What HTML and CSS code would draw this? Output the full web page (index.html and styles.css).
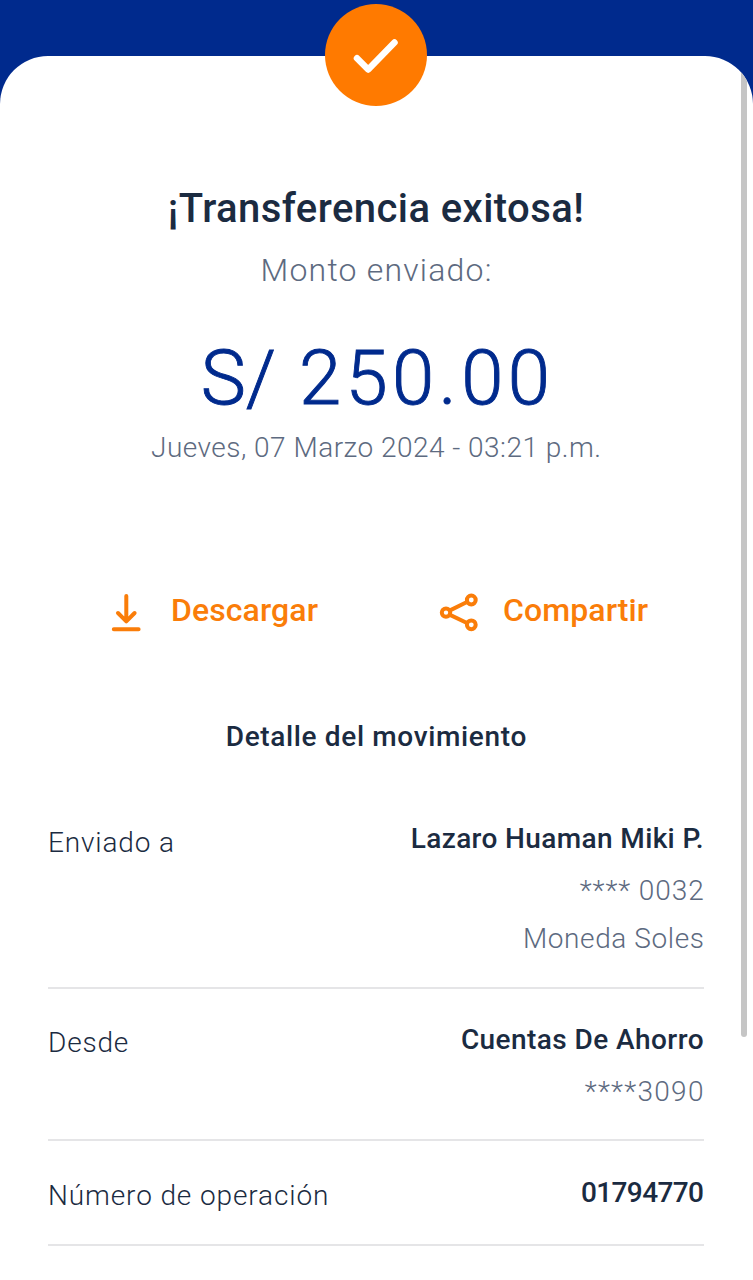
FILE: index.html
```html
<!DOCTYPE html>
<html lang="es">
<head>
<meta charset="utf-8">
<title>Transferencia exitosa</title>
<link rel="stylesheet" href="styles.css">
</head>
<body>
<main class="sheet">
  <div class="badge">
    <svg width="102" height="102" viewBox="0 0 102 102" fill="none" stroke="#fff" stroke-width="6.5" stroke-linecap="round" stroke-linejoin="round"><path d="M32 54.3 L43.2 65.5 L69.5 38.5"/></svg>
  </div>
  <h1 class="title">¡Transferencia exitosa!</h1>
  <p class="caption">Monto enviado:</p>
  <p class="amount"><span class="currency">S/</span> 250.00</p>
  <p class="date">Jueves, 07 Marzo 2024 - 03:21 p.m.</p>
  <div class="actions">
    <a class="action download">
      <svg width="30" height="44" viewBox="0 0 30 44" fill="none" stroke="#fa7d09" stroke-width="4" stroke-linecap="round" stroke-linejoin="round"><path d="M15.3 6v25M7 23l8.3 8.3L23.6 23M2.8 39.3h24.8"/></svg>
      <span class="download-text">Descargar</span>
    </a>
    <a class="action share">
      <svg width="40" height="44" viewBox="0 0 40 44" fill="none" stroke="#fa7d09" stroke-width="4"><circle cx="7" cy="22.6" r="4.2"/><circle cx="32.3" cy="10" r="4.4"/><circle cx="32.3" cy="34.8" r="4.4"/><path d="M10.5 20.6l18-8.8M10.5 24.6l18 8.6"/></svg>
      <span class="share-text">Compartir</span>
    </a>
  </div>
  <h2 class="section">Detalle del movimiento</h2>
  <section class="details">
    <div class="row sent">
      <span class="label label-sent">Enviado a</span>
      <div class="values"><b class="v-name">Lazaro Huaman Miki P.</b><span class="v-card">**** 0032</span><span class="v-currency">Moneda Soles</span></div>
    </div>
    <div class="row from">
      <span class="label label-from">Desde</span>
      <div class="values"><b class="v-account">Cuentas De Ahorro</b><span class="v-source">****3090</span></div>
    </div>
    <div class="row operation">
      <span class="label label-op">Número de operación</span>
      <div class="values"><b class="v-op">01794770</b></div>
    </div>
  </section>
  <div class="scroll-area"><div class="scrollbar"></div></div>
</main>
</body>
</html>
```
FILE: styles.css
```css
* { box-sizing: border-box; }
body {
  margin: 0;
  height: 1280px;
  padding-top: 56px;
  overflow: hidden;
  background: #002a8d;
  font-family: Roboto, "Open Sans", sans-serif;
  color: #1b2b41;
}
h1, h2, p { margin: 0; text-align: center; }
.sheet {
  position: relative;
  height: 1224px;
  padding: 129px 49px 0 48px;
  background: #fff;
  border-radius: 48px 48px 0 0;
}
.badge {
  position: absolute;
  top: -52px;
  left: 325px;
  width: 102px;
  height: 102px;
  border-radius: 50%;
  background: #ff7a00;
}
.badge svg { display: block; }
.title { font-size: 40px; line-height: 48px; font-weight: 500; letter-spacing: 0.43px; }
.caption { margin-top: 17px; font-size: 32px; line-height: 40px; font-weight: 300; letter-spacing: 1.2px; text-indent: 1.2px; color: #5d6a80; }
.amount { margin-top: 43px; font-size: 76px; line-height: 90px; font-weight: 300; letter-spacing: 4.4px; text-indent: 3px; color: #002a8d; -webkit-text-stroke: 0.9px #002a8d; }
.currency { letter-spacing: 0; }
.date { margin-top: 5px; font-size: 28px; line-height: 40px; font-weight: 300; letter-spacing: 0.48px; text-indent: 0.5px; color: #5d6a80; }
.actions { display: flex; margin-top: 122px; height: 40px; color: #fa7d09; font-size: 32px; line-height: 40px; font-weight: 500; }
.action { display: flex; }
.download { padding-left: 63px; width: 391px; gap: 30px; letter-spacing: 0.1px; }
.share { gap: 24px; letter-spacing: 0.1px; }
.section { margin-top: 87px; font-size: 28px; line-height: 40px; font-weight: 500; letter-spacing: 0.65px; text-indent: 0.65px; }
.details { margin-top: 32px; font-size: 28px; line-height: 40px; }
.row { display: flex; justify-content: space-between; padding-top: 30px; border-bottom: 2px solid #e5e5e7; }
.sent { height: 200px; }
.from { height: 152px; padding-top: 31px; }
.operation { height: 105px; padding-top: 32px; }
.label { padding-top: 3px; font-weight: 300; white-space: nowrap; }
.sent .label { padding-top: 4px; }
.label-sent { letter-spacing: 0.85px; }
.label-from { letter-spacing: 0.8px; }
.label-op { letter-spacing: 0.88px; }
.values { display: flex; flex-direction: column; align-items: flex-end; white-space: nowrap; }
.values b { font-weight: 500; }
.values span { font-weight: 300; color: #5d6a80; }
.v-name { letter-spacing: 0.37px; }
.values .v-card { margin: 12px -0.8px 0 0; letter-spacing: 0.95px; }
.values .v-currency { margin: 8px -0.6px 0 0; letter-spacing: 0.6px; }
.v-account { letter-spacing: 0.43px; }
.values .v-source { margin: 12px -0.8px 0 0; letter-spacing: 1.3px; }
.v-op { margin-right: 0.6px; letter-spacing: -0.6px; }
/* Clips the scroll thumb to the sheet's rounded corner. */
.scroll-area {
  position: absolute;
  inset: 0;
  overflow: hidden;
  border-radius: inherit;
  pointer-events: none;
}
.scrollbar {
  position: absolute;
  top: 8px;
  right: 6px;
  width: 6px;
  height: 973px;
  border-radius: 3px;
  background: #c5c5c5;
}
```
